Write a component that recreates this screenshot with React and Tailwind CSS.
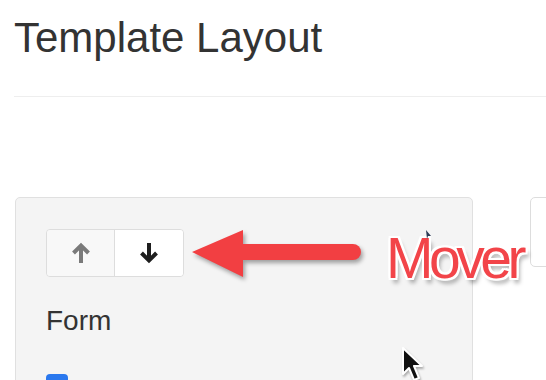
import React from "react";

function ArrowIcon({ down, className }) {
  return (
    <svg width="20" height="22" viewBox="0 0 20 22" className={className}>
      {down ? (
        <path d="M10 1 V18 M2.5 11 L10 18.5 L17.5 11" fill="none" stroke="currentColor" strokeWidth="4" strokeLinecap="butt" strokeLinejoin="miter" />
      ) : (
        <path d="M10 21 V4 M2.5 11 L10 3.5 L17.5 11" fill="none" stroke="currentColor" strokeWidth="4" strokeLinecap="butt" strokeLinejoin="miter" />
      )}
    </svg>
  );
}

export default function App() {
  return (
    <div
      className="relative w-[546px] h-[380px] overflow-hidden bg-white"
      style={{ fontFamily: '"Liberation Sans", Arial, sans-serif' }}
    >
      <h1 className="ml-[14px] mt-[17px] text-[42px] leading-none text-[#333]">Template Layout</h1>
      <div className="ml-[14px] mt-[37px] border-t border-[#eeeeee]" />

      <div className="mt-[100px] flex gap-[57px]">
        <div className="ml-[15px] w-[458px] h-[220px] shrink-0 rounded-[5px] border border-[#e0e0e0] bg-[#f4f4f4] pl-[30px] pt-[31px]">
          <div className="flex w-[138px] h-[48px] rounded-[4px] border border-[#dddddd] overflow-hidden">
            <div className="flex w-[68px] items-center justify-center bg-[#f8f8f8] text-[#7a7a7a] border-r border-[#dddddd]">
              <ArrowIcon />
            </div>
            <div className="flex flex-1 items-center justify-center bg-white text-[#1e1e1e]">
              <ArrowIcon down />
            </div>
          </div>
          <div className="mt-[30px] text-[28px] leading-none text-[#333]">Form</div>
          <div className="mt-[39px] flex items-start gap-3">
            <div className="w-[22px] h-[22px] rounded-[4px] bg-[#2a78ee]" />
            <span className="mt-[4px] text-[20px] leading-[22px] text-[#777]">Campo</span>
          </div>
        </div>
        <div className="w-[60px] h-[70px] shrink-0 rounded-[5px] border border-[#dddddd] bg-white" />
      </div>

      {/* annotation arrow */}
      <svg
        className="absolute left-[185px] top-[222px]"
        width="185"
        height="66"
        viewBox="0 0 185 66"
        style={{ filter: "drop-shadow(2px 3px 2px rgba(0,0,0,0.35))" }}
      >
        <path d="M58 30 H168" stroke="#f23f42" strokeWidth="16" strokeLinecap="round" />
        <path d="M7 30 L58 8 L58 55 Z" fill="#f23f42" />
      </svg>

      <div
        className="absolute left-[386px] top-[230px] text-[57px] leading-none tracking-[-4.5px] text-[#f24449] [text-shadow:2px_0_0_#fff,-2px_0_0_#fff,0_2px_0_#fff,0_-2px_0_#fff,2px_2px_0_#fff,-2px_-2px_0_#fff,2px_-2px_0_#fff,-2px_2px_0_#fff,3px_5px_4px_rgba(0,0,0,0.35)]"
      >
        Mover
      </div>

      {/* small text cursor */}
      <svg className="absolute left-[426px] top-[230px]" width="6" height="10" viewBox="0 0 6 10">
        <path d="M0 0 L5 6 L2 6 L1 9 Z" fill="#2b3a55" />
      </svg>

      {/* mouse pointer */}
      <svg
        className="absolute left-[401px] top-[346px]"
        width="26"
        height="40"
        viewBox="0 0 26 40"
        style={{ filter: "drop-shadow(1px 2px 1px rgba(0,0,0,0.3))" }}
      >
        <path d="M2 2 L2 28 L8 22 L13 34 L18 32 L13 20 L21 20 Z" fill="#111" stroke="#fff" strokeWidth="2" strokeLinejoin="round" />
      </svg>
    </div>
  );
}
